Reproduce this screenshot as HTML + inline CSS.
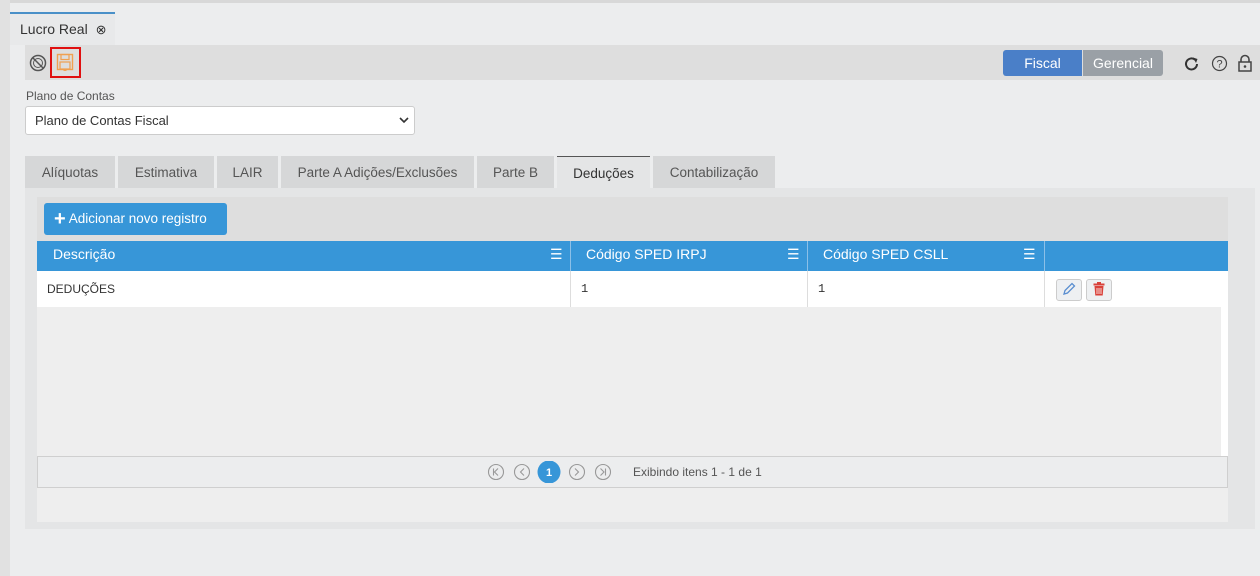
<!DOCTYPE html>
<html><head><meta charset="utf-8"><style>
*{box-sizing:border-box;margin:0;padding:0}
body{width:1260px;height:576px;overflow:hidden;background:#ecedee;font-family:"Liberation Sans",sans-serif;position:relative;color:#333}
.a{position:absolute}
</style></head><body>
<div class="a" style="left:0;top:0;width:1260px;height:3px;background:#d8d8d8"></div>
<div class="a" style="left:0;top:0;width:10px;height:576px;background:#e1e1e1"></div>
<div class="a" style="left:10px;top:12px;width:105px;height:33px;background:#e8e9ea;border-top:2px solid #4a90c8"></div>
<div class="a" style="left:20px;top:21px;font-size:14px;color:#333">Lucro Real <span style="font-size:13px;margin-left:4px">⊗</span></div>
<div class="a" style="left:25px;top:45px;width:1235px;height:35px;background:#dedede"></div>
<svg class="a" style="left:29px;top:54px" width="18" height="18" viewBox="0 0 18 18"><circle cx="9" cy="9" r="7.5" fill="none" stroke="#555" stroke-width="1.5"/><circle cx="9" cy="9" r="4.5" fill="none" stroke="#555" stroke-width="1"/><path d="M4 4L14 14" stroke="#555" stroke-width="1.5"/></svg>
<div class="a" style="left:50px;top:47px;width:31px;height:31px;border:2px solid #e01010"></div>
<svg class="a" style="left:56px;top:53px" width="18" height="20" viewBox="0 0 18 20"><rect x="1.5" y="1.5" width="15" height="15" fill="none" stroke="#f0a050" stroke-width="1.4"/><rect x="5" y="1.5" width="8" height="5" fill="none" stroke="#f0a050" stroke-width="1.2"/><rect x="4" y="9" width="10" height="7" fill="none" stroke="#f0a050" stroke-width="1.2"/><path d="M7 18l2-1.5 2 1.5z" fill="#f0a050"/></svg>
<div class="a" style="left:1003px;top:50px;width:79px;height:26px;background:#4a7fc8;border-radius:3px 0 0 3px;color:#fff;font-size:14px;text-align:center;line-height:26px">Fiscal</div>
<div class="a" style="left:1083px;top:50px;width:80px;height:26px;background:#9aa0a6;border-radius:0 3px 3px 0;color:#fff;font-size:14px;text-align:center;line-height:26px">Gerencial</div>
<svg class="a" style="left:1183px;top:55px" width="18" height="18" viewBox="0 0 18 18"><path d="M14 9a5.5 5.5 0 1 1-2-4.3" fill="none" stroke="#333" stroke-width="2"/><path d="M10 2.5l4.5 1.5-1.5 4z" fill="#333"/></svg>
<svg class="a" style="left:1211px;top:55px" width="17" height="17" viewBox="0 0 17 17"><circle cx="8.5" cy="8.5" r="7" fill="none" stroke="#444" stroke-width="1.2"/><text x="8.5" y="12.5" font-size="11" text-anchor="middle" fill="#444" font-family="Liberation Sans">?</text></svg>
<svg class="a" style="left:1237px;top:54px" width="16" height="18" viewBox="0 0 16 18"><path d="M4 8V5.5a4 4 0 0 1 8 0V8" fill="none" stroke="#444" stroke-width="1.6"/><rect x="2" y="8" width="12" height="9" fill="none" stroke="#444" stroke-width="1.5"/><circle cx="8" cy="12.5" r="1.3" fill="#444"/></svg>
<div class="a" style="left:26px;top:89px;font-size:12px;color:#555">Plano de Contas</div>
<div class="a" style="left:25px;top:106px;width:390px;height:29px;background:#fff;border:1px solid #ccc;border-radius:3px;font-size:13px;line-height:27px;padding-left:9px;color:#333">Plano de Contas Fiscal</div>
<svg class="a" style="left:399px;top:116px" width="10" height="8" viewBox="0 0 10 8"><path d="M1 2l4 4 4-4" fill="none" stroke="#333" stroke-width="1.6"/></svg>
<div class="a" style="left:25px;top:156px;height:32px;display:flex;font-size:13.5px;color:#555">
<div style="width:90px;margin-right:3px;background:#d6d7d8;text-align:center;line-height:34px">Alíquotas</div>
<div style="width:96px;margin-right:3px;background:#d6d7d8;text-align:center;line-height:34px">Estimativa</div>
<div style="width:61px;margin-right:3px;background:#d6d7d8;text-align:center;line-height:34px">LAIR</div>
<div style="width:193px;margin-right:3px;background:#d6d7d8;text-align:center;line-height:34px">Parte A Adições/Exclusões</div>
<div style="width:77px;margin-right:3px;background:#d6d7d8;text-align:center;line-height:34px">Parte B</div>
<div style="width:93px;margin-right:3px;background:#e4e5e6;border-top:1px solid #555;text-align:center;line-height:33px;color:#333">Deduções</div>
<div style="width:122px;background:#d6d7d8;text-align:center;line-height:34px">Contabilização</div>
</div>
<div class="a" style="left:25px;top:188px;width:1230px;height:341px;background:#e4e5e6"></div>
<div class="a" style="left:37px;top:197px;width:1191px;height:325px;background:#eeeeee"></div>
<div class="a" style="left:37px;top:197px;width:1191px;height:44px;background:#dedede"></div>
<div class="a" style="left:44px;top:203px;width:183px;height:32px;background:#3796d8;border-radius:3px;color:#fff;font-size:13.5px;line-height:32px;padding-left:10px"><b style="font-size:20px;vertical-align:-2px">+</b> Adicionar novo registro</div>
<div class="a" style="left:37px;top:241px;width:1191px;height:30px;background:#3796d8;color:#fff;font-size:14px;line-height:27px">
<div class="a" style="left:16px">Descrição</div><div class="a" style="left:513px">☰</div>
<div class="a" style="left:533px;top:0;width:1px;height:30px;background:#8cc0e8"></div>
<div class="a" style="left:549px">Código SPED IRPJ</div><div class="a" style="left:750px">☰</div>
<div class="a" style="left:770px;top:0;width:1px;height:30px;background:#8cc0e8"></div>
<div class="a" style="left:786px">Código SPED CSLL</div><div class="a" style="left:986px">☰</div>
<div class="a" style="left:1007px;top:0;width:1px;height:30px;background:#8cc0e8"></div>
</div>
<div class="a" style="left:37px;top:271px;width:1191px;height:36px;background:#fff;font-size:12px;line-height:36px;color:#333">
<div class="a" style="left:10px">DEDUÇÕES</div>
<div class="a" style="left:533px;top:0;width:1px;height:36px;background:#ddd"></div>
<div class="a" style="left:544px;font-family:'Liberation Mono',monospace">1</div>
<div class="a" style="left:770px;top:0;width:1px;height:36px;background:#ddd"></div>
<div class="a" style="left:781px;font-family:'Liberation Mono',monospace">1</div>
<div class="a" style="left:1007px;top:0;width:1px;height:36px;background:#ddd"></div>
<div class="a" style="left:1019px;top:8px;width:26px;height:22px;background:#eef0f2;border:1px solid #ccc;border-radius:3px"></div>
<div class="a" style="left:1049px;top:8px;width:26px;height:22px;background:#eef0f2;border:1px solid #ccc;border-radius:3px"></div>
</div>
<svg class="a" style="left:1062px;top:282px" width="14" height="14" viewBox="0 0 14 14"><path d="M2 12l1-3.5 7-7 2.5 2.5-7 7z" fill="none" stroke="#5a8ed0" stroke-width="1.3"/></svg>
<svg class="a" style="left:1093px;top:282px" width="12" height="14" viewBox="0 0 12 14"><rect x="0.5" y="1.5" width="11" height="2" fill="#d9413a"/><rect x="4" y="0" width="4" height="2" fill="#d9413a"/><path d="M1.5 4h9l-0.8 9.5h-7.4z" fill="#d9413a"/><path d="M4 6v6M6 6v6M8 6v6" stroke="#fff" stroke-width="0.8"/></svg>
<div class="a" style="left:1221px;top:307px;width:7px;height:149px;background:#fff"></div>
<div class="a" style="left:37px;top:456px;width:1191px;height:32px;border:1px solid #cfcfcf;background:#ecedee"></div>
<svg class="a" style="left:486px;top:461px" width="130" height="22" viewBox="0 0 130 22">
<g fill="none" stroke="#999" stroke-width="1.1"><circle cx="10" cy="11" r="7.5"/><path d="M12 7.5l-3.5 3.5 3.5 3.5M7.5 7.5v7"/><circle cx="36" cy="11" r="7.5"/><path d="M38 7.5l-3.5 3.5 3.5 3.5"/><circle cx="91" cy="11" r="7.5"/><path d="M89 7.5l3.5 3.5-3.5 3.5"/><circle cx="117" cy="11" r="7.5"/><path d="M114.5 7.5l3.5 3.5-3.5 3.5M119.5 7.5v7"/></g>
<circle cx="63" cy="11" r="11.5" fill="#3796d8"/><text x="63" y="15" font-size="11" font-weight="bold" fill="#fff" text-anchor="middle" font-family="Liberation Sans">1</text></svg>
<div class="a" style="left:633px;top:465px;font-size:12px;color:#555">Exibindo itens 1 - 1 de 1</div>
</body></html>
